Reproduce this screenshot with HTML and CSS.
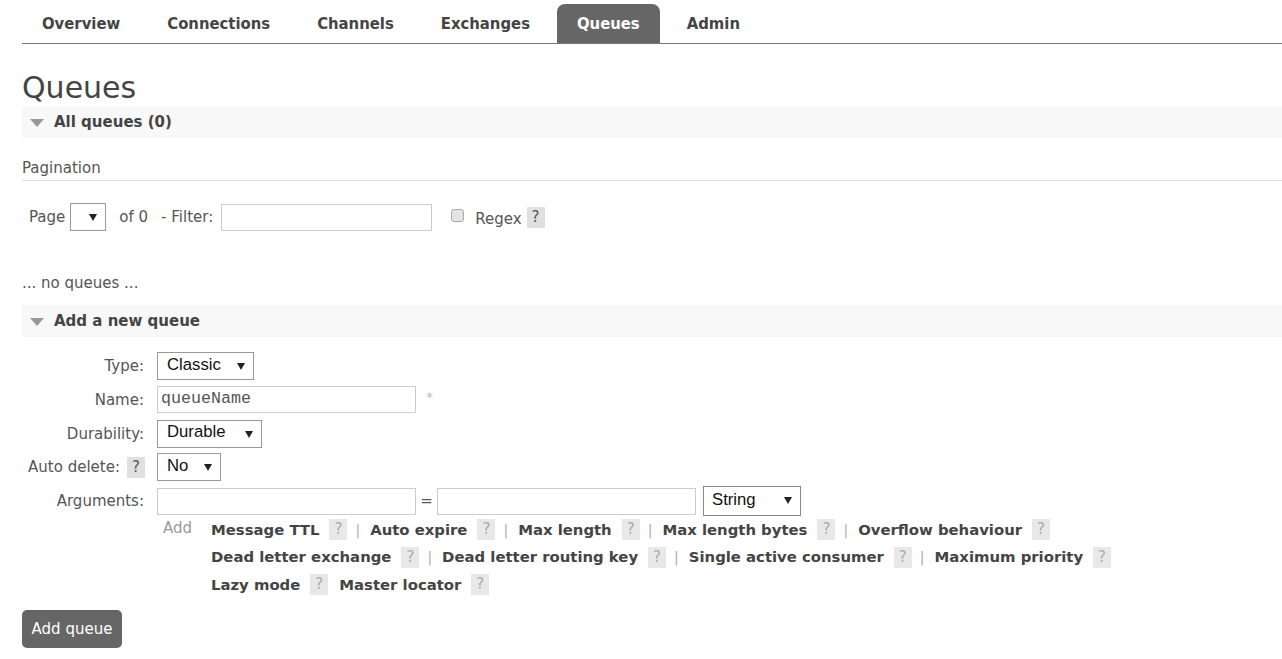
FILE: index.html
```html
<!DOCTYPE html>
<html>
<head>
<meta charset="utf-8">
<title>Queues</title>
<link rel="stylesheet" href="styles.css">
</head>
<body>
<div class="page">
  <ul class="menu">
    <li class="tab">Overview</li>
    <li class="tab">Connections</li>
    <li class="tab">Channels</li>
    <li class="tab">Exchanges</li>
    <li class="tab active">Queues</li>
    <li class="tab">Admin</li>
  </ul>

  <h1 class="title">Queues</h1>

  <div class="section-head">
    <span class="tri"></span>
    <span class="section-title">All queues (0)</span>
  </div>

  <div class="pag-head">Pagination</div>

  <div class="filter-row">
    <span class="txt page-lbl">Page</span>
    <span class="sel sel-page"><span class="arrow"><svg width="8" height="7" viewBox="0 0 8 7"><polygon points="0,0 8,0 4,7" fill="#222"/></svg></span></span>
    <span class="txt of-lbl">of 0</span>
    <span class="txt filter-lbl">- Filter:</span>
    <span class="inp inp-filter"></span>
    <span class="chk"></span>
    <span class="txt regex-lbl">Regex</span>
    <span class="help dark">?</span>
  </div>

  <div class="empty">... no queues ...</div>

  <div class="section-head">
    <span class="tri"></span>
    <span class="section-title">Add a new queue</span>
  </div>

  <div class="form">
    <div class="frow">
      <span class="flabel">Type:</span>
      <span class="sel sel-type"><span class="seltxt">Classic</span><span class="arrow"><svg width="8" height="7" viewBox="0 0 8 7"><polygon points="0,0 8,0 4,7" fill="#222"/></svg></span></span>
    </div>
    <div class="frow">
      <span class="flabel">Name:</span>
      <span class="inp inp-wide"><span class="ph">queueName</span></span>
      <span class="star">*</span>
    </div>
    <div class="frow">
      <span class="flabel">Durability:</span>
      <span class="sel sel-dur"><span class="seltxt">Durable</span><span class="arrow"><svg width="8" height="7" viewBox="0 0 8 7"><polygon points="0,0 8,0 4,7" fill="#222"/></svg></span></span>
    </div>
    <div class="frow">
      <span class="flabel">Auto delete: <span class="help dark">?</span></span>
      <span class="sel sel-no"><span class="seltxt">No</span><span class="arrow"><svg width="8" height="7" viewBox="0 0 8 7"><polygon points="0,0 8,0 4,7" fill="#222"/></svg></span></span>
    </div>
    <div class="frow">
      <span class="flabel">Arguments:</span>
      <span class="inp inp-wide"></span>
      <span class="eq">=</span>
      <span class="inp inp-wide"></span>
      <span class="sel sel-str"><span class="seltxt">String</span><span class="arrow"><svg width="8" height="7" viewBox="0 0 8 7"><polygon points="0,0 8,0 4,7" fill="#222"/></svg></span></span>
    </div>
    <div class="addrow">
      <span class="add">Add</span>
      <div class="links">
        <div class="lline">
          <span class="arg">Message TTL</span><span class="help">?</span><span class="sep">|</span>
          <span class="arg">Auto expire</span><span class="help">?</span><span class="sep">|</span>
          <span class="arg">Max length</span><span class="help">?</span><span class="sep">|</span>
          <span class="arg">Max length bytes</span><span class="help">?</span><span class="sep">|</span>
          <span class="arg">Overflow behaviour</span><span class="help">?</span>
        </div>
        <div class="lline">
          <span class="arg">Dead letter exchange</span><span class="help">?</span><span class="sep">|</span>
          <span class="arg">Dead letter routing key</span><span class="help">?</span><span class="sep">|</span>
          <span class="arg">Single active consumer</span><span class="help">?</span><span class="sep">|</span>
          <span class="arg">Maximum priority</span><span class="help">?</span>
        </div>
        <div class="lline">
          <span class="arg">Lazy mode</span><span class="help">?</span>
          <span class="arg gap">Master locator</span><span class="help">?</span>
        </div>
      </div>
    </div>
  </div>

  <div class="btn">Add queue</div>
</div>
</body>
</html>
```

FILE: styles.css
```css
* { box-sizing: border-box; }

body {
  margin: 0;
  background: #fff;
  font-family: "DejaVu Sans", Verdana, sans-serif;
  font-size: 15px;
  color: #484848;
}

.page {
  padding-left: 22px;
}

.menu {
  list-style: none;
  margin: 0;
  padding: 4px 0 0 0;
  display: flex;
  gap: 7px;
  border-bottom: 1px solid #777;
}

.tab {
  font-family: "DejaVu Sans Condensed", "DejaVu Sans", sans-serif;
  font-weight: bold;
  font-size: 16.5px;
  color: #444;
  height: 39px;
  line-height: 39px;
  padding: 0 20px;
}

.tab.active {
  background: #666;
  color: #fff;
  border-radius: 8px 8px 0 0;
}

.title {
  font-size: 30px;
  font-weight: normal;
  color: #444;
  line-height: 36px;
  margin: 26px 0 0 0;
}

.section-head {
  background: #f8f8f8;
  height: 32px;
  display: flex;
  align-items: center;
  padding-left: 8px;
}

.tri {
  width: 0;
  height: 0;
  border-left: 7px solid transparent;
  border-right: 7px solid transparent;
  border-top: 8px solid #999;
  margin-right: 10px;
  margin-top: 1px;
}

.section-title {
  font-weight: bold;
  color: #444;
  line-height: 18px;
}

.pag-head {
  margin-top: 21px;
  line-height: 18px;
  padding-bottom: 3px;
  border-bottom: 1px solid #ddd;
  color: #555;
}

.filter-row {
  display: flex;
  align-items: center;
  height: 28px;
  margin-top: 22px;
}

.txt {
  line-height: 18px;
  color: #555;
}

.page-lbl { margin-left: 7px; margin-right: 5px; }
.of-lbl { margin-left: 13px; margin-right: 13px; }
.filter-lbl { margin-right: 8px; }

.sel {
  display: flex;
  align-items: center;
  height: 28px;
  border: 1px solid #999;
  background: #fff;
  font-family: "Liberation Sans", Arial, sans-serif;
  font-size: 16.7px;
  color: #111;
  position: relative;
}

.seltxt {
  padding-left: 9px;
  line-height: 20px;
  margin-top: -3px;
}

.arrow {
  position: absolute;
  right: 8px;
  top: 10px;
  display: flex;
}

.sel-page { width: 36px; }
.sel-type { width: 97px; }
.sel-dur { width: 105px; }
.sel-no { width: 64px; }
.sel-str { width: 98px; height: 30px; margin-left: 7px; border-color: #888; }
.sel-str .seltxt { padding-left: 8px; }

.inp {
  display: flex;
  align-items: center;
  height: 27px;
  border: 1px solid #ccc;
  background: #fff;
}

.inp-filter { width: 211px; }
.inp-wide { width: 259px; }

.ph {
  font-family: "Liberation Mono", "Courier New", monospace;
  font-size: 16.67px;
  color: #555;
  padding-left: 3px;
  margin-top: -2px;
}

.chk {
  width: 13px;
  height: 13px;
  border: 1px solid #aaa;
  border-radius: 3px;
  background: #e4e4e4;
  margin-left: 19px;
  margin-right: 11px;
  margin-top: -3px;
}

.regex-lbl { margin-right: 5px; margin-top: 3px; }

.help {
  display: inline-block;
  width: 18px;
  height: 21px;
  line-height: 21px;
  text-align: center;
  background: #e8e8e8;
  color: #aaa;
  font-size: 15px;
}

.help.dark {
  background: #e0e0e0;
  color: #555;
}

.empty {
  margin-top: 43px;
  line-height: 18px;
  color: #555;
}

.empty + .section-head { margin-top: 13px; }

.form {
  margin-top: 15px;
}

.frow {
  display: flex;
  align-items: center;
  height: 28px;
  margin-bottom: 5.75px;
}

.flabel {
  width: 122px;
  text-align: right;
  margin-right: 13px;
  line-height: 18px;
  color: #555;
  display: flex;
  justify-content: flex-end;
  align-items: center;
  gap: 7px;
  white-space: nowrap;
}

.flabel .help { margin-right: -1px; }

.star {
  color: #bbb;
  margin-left: 10px;
  font-size: 14px;
  margin-top: -6px;
}

.eq {
  width: 21px;
  text-align: center;
  color: #555;
}

.addrow {
  display: flex;
  margin-left: 135px;
  margin-top: -5px;
}

.add {
  width: 54px;
  padding-left: 6px;
  color: #999;
  line-height: 24px;
}

.links {
  display: flex;
  flex-direction: column;
}

.lline {
  display: flex;
  align-items: center;
  height: 27.5px;
}

.arg {
  font-weight: bold;
  font-size: 14.85px;
  color: #444;
  margin-right: 10px;
}

.arg.gap { margin-left: 11px; }

.sep {
  color: #aaa;
  margin: 0 10px 0 8px;
  font-size: 14px;
}

.btn {
  display: inline-block;
  margin-top: 12px;
  width: 100px;
  height: 38px;
  line-height: 38px;
  text-align: center;
  background: #666;
  color: #fff;
  border-radius: 5px;
}
```
